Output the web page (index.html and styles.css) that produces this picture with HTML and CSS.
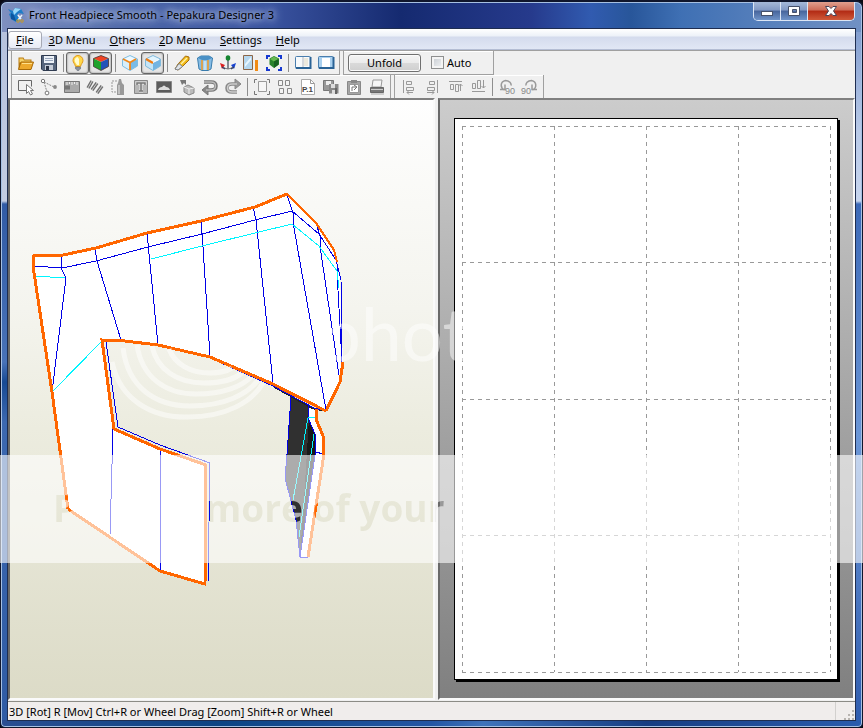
FILE: index.html
```html
<!DOCTYPE html>
<html lang="en">
<head>
    <meta charset="UTF-8">
    <meta name="viewport" content="width=device-width, initial-scale=1.0">
    <title>Front Headpiece Smooth - Pepakura Designer 3</title>
    <link rel="stylesheet" href="styles.css">
</head>
<body>
    <div class="window">
        <header class="titlebar">
            <svg class="app-icon" viewBox="0 0 16 16">
                <path d="M0 2 5 4 7 1 13 2 16 7 11 6 9 8 12 13 8 15 3 12 1 7 3 6z" fill="#1c7cc8"/>
                <path d="M5 4 7 1 13 2 9 5 6 8z" fill="#9ad8f8"/>
                <path d="M3 6 6 8 8 14 3 12z" fill="#0d559f"/>
                <path d="M10 8l3 4M14 8l-4 5" stroke="#e8f2fa" stroke-width="1.5"/>
                <circle cx="10" cy="14" r="1.3" fill="none" stroke="#c59a28"/>
                <circle cx="14" cy="14" r="1.3" fill="none" stroke="#c59a28"/>
            </svg>
            <h1>Front Headpiece Smooth - Pepakura Designer 3</h1>
            <div class="window-buttons">
                <button class="win-btn" aria-label="Minimize">
                    <svg viewBox="0 0 14 14"><rect x="1.5" y="7.5" width="11" height="4" fill="#fff" stroke="#46516b"/></svg>
                </button>
                <button class="win-btn" aria-label="Maximize">
                    <svg viewBox="0 0 14 14"><path d="M1.500 2.500h11v9h-11zM5.500 5.500h4v3h-4z" fill="#fff" fill-rule="evenodd" stroke="#46516b"/></svg>
                </button>
                <button class="win-btn close" aria-label="Close">
                    <svg viewBox="0 0 14 14"><path d="M1.500 2.500H5l2 2 2-2h3.500L9.500 7l3 4.500H9l-2-2-2 2H1.500l3-4.500z" fill="#fff" stroke="#4a4458"/></svg>
                </button>
            </div>
        </header>

        <div class="content">
            <nav class="menubar">
                <button class="active"><u>F</u>ile</button>
                <button><u>3</u>D Menu</button>
                <button><u>O</u>thers</button>
                <button><u>2</u>D Menu</button>
                <button><u>S</u>ettings</button>
                <button><u>H</u>elp</button>
            </nav>

            <div class="toolbar">
                <div class="band">
                    <button class="tool" aria-label="Open">
                        <svg viewBox="0 0 16 16"><path d="M.5 14V2.500h5l1 2h7V14z" fill="#b87b12"/><path d="M1.500 3.500h3.500l1 2h6.500v2h-11z" fill="#f6d268"/><path d="M.5 14.500 3 7h12.500l-2.500 7.500z" fill="#eda92c" stroke="#a86b08"/><path d="M4 8.500h10" stroke="#ffe08a"/></svg>
                    </button>
                    <button class="tool" aria-label="Save">
                        <svg viewBox="0 0 16 16"><path d="M.5.5h15v15H2l-1.500-1.500z" fill="#56657c" stroke="#2f3b50"/><path d="M3 1h10v7H3z" fill="#edf2f8"/><path d="M4 3.500h8M4 5.500h8" stroke="#9aa8bd"/><path d="M4 10h8v5H4z" fill="#c6cdd8"/><path d="M5 11h3v4H5z" fill="#2b3446"/></svg>
                    </button>
                    <i class="sep"></i>
                    <button class="tool pressed" aria-label="Light">
                        <svg viewBox="0 0 16 16"><path d="M8 .5a5 5 0 0 0-5 5c0 2 2 3.500 2.500 6h5c.5-2.500 2.500-4 2.500-6a5 5 0 0 0-5-5z" fill="#ffd84a" stroke="#e0981c"/><path d="M7.500 2a3.500 3.500 0 0 0-2.500 5l2 3h2V4z" fill="#fffbd0"/><path d="M5.500 12h5v2h-1l-.5 1.500H7L6.500 14h-1z" fill="#8c93a0" stroke="#5d6472" stroke-width=".5"/></svg>
                    </button>
                    <button class="tool pressed" aria-label="Texture">
                        <svg viewBox="0 0 16 16"><path d="M8 .5 15.500 3.500 8 7 .5 3.500z" fill="#ef4423"/><path d="M.5 3.500 8 7v8.500l-7.500-4z" fill="#1fa22b"/><path d="M15.500 3.500 8 7v8.500l7.500-4z" fill="#2254b8"/><path d="M8 .5 15.500 3.500v8L8 15.500l-7.500-4v-8z" fill="none" stroke="#473433" stroke-width=".8"/></svg>
                    </button>
                    <i class="sep"></i>
                    <button class="tool" aria-label="Box view">
                        <svg viewBox="0 0 16 16"><path d="M8 .5 15.500 4 8 7.500.5 4z" fill="#edf9ff"/><path d="M.5 4 8 7.500v8L.5 11z" fill="#d8effb"/><path d="M15.500 4 8 7.500v8l7.500-4.500z" fill="#7abbe6"/><path d="M8 .5 15.500 4v7L8 15.500.5 11V4z" fill="none" stroke="#7fbde2"/><path d="M1 4l7 3.500V15M8 7.500 14 4" fill="none" stroke="#f28718" stroke-width="1.800"/></svg>
                    </button>
                    <button class="tool pressed" aria-label="Edge view">
                        <svg viewBox="0 0 16 16"><path d="M8 .5 15.500 4 8 7.500.5 4z" fill="#e3f5fe"/><path d="M.5 4 8 7.500v8L.5 11z" fill="#c5e5f7"/><path d="M15.500 4 8 7.500v8l7.500-4.500z" fill="#72b4e2"/><path d="M8 .5 15.500 4v7L8 15.500.5 11V4z" fill="none" stroke="#7fb9dc"/><path d="M1 4l7 4" stroke="#f07c12" stroke-width="2.200"/><path d="M8 7.500 14 4.500" stroke="#fff"/></svg>
                    </button>
                    <i class="sep"></i>
                    <button class="tool" aria-label="Cut edge">
                        <svg viewBox="0 0 16 16"><path d="M4 9 11.500 1 15 2 15 5 8 12 4 15 1 14z" fill="#f1ba17" stroke="#a56c0c"/><path d="M1 14 5 8.500 8.500 11.500 4 15z" fill="#dfe3e8" stroke="#7e8792"/><path d="M7 9 13 3" stroke="#fff2a6" stroke-width="1.500"/></svg>
                    </button>
                    <button class="tool" aria-label="Cylinder">
                        <svg viewBox="0 0 16 16"><path d="M.5 3 4 1h8l3.500 2L14 14l-3 1.500H5L2 14z" fill="#85bce5" stroke="#397cad"/><path d="M1 3l4 2h6l4-2-3-2H4z" fill="#4a91c6"/><path d="M5 5v10M11 5v10" stroke="#f39b25" stroke-width="1.500"/><path d="M8 6v9" stroke="#c2e0f5" stroke-width="3"/></svg>
                    </button>
                    <button class="tool" aria-label="Axes">
                        <svg viewBox="0 0 16 16"><path d="M8 4v10" stroke="#4b5260" stroke-width="1.300"/><ellipse cx="8" cy="3" rx="2.300" ry="2.800" fill="#168530"/><path d="M2 11q3 3 6 3t6-3" fill="none" stroke="#777" stroke-width="1"/><path d="M0 8l5 2-3 4z" fill="#dc2020"/><path d="M16 8l-5 2 3 4z" fill="#1742cf"/><path d="M2 12l3 2M14 12l-3 2" stroke="#343f64" stroke-width="1.500"/></svg>
                    </button>
                    <button class="tool" aria-label="Mirror">
                        <svg viewBox="0 0 16 16"><path d="M.5.5h9v14h-9z" fill="#b5d7ef" stroke="#8b6648"/><path d="M2 9 8 2v3L2 12z" fill="#e9f6fd"/><path d="M12 5h3v11h-3z" fill="#f18c17"/></svg>
                    </button>
                    <button class="tool" aria-label="Fit model">
                        <svg viewBox="0 0 16 16"><path d="M1 4V1h3M12 1h3v3M1 12v3h3M12 15h3v-3" fill="none" stroke="#1639d0" stroke-width="2"/><path d="M8 1 13 3.500v6L8 13 3.500 9.500v-6z" fill="#29822c"/><path d="M8 1.500 12.500 4 8 6.500 4 4z" fill="#67b851"/><path d="M8 6.500V13l4.500-3.500V4z" fill="#176021"/></svg>
                    </button>
                    <i class="sep"></i>
                    <button class="tool" aria-label="Split windows">
                        <svg viewBox="0 0 16 16"><rect x=".5" y="1.500" width="15" height="12" rx="1" fill="#f7fafc" stroke="#4a7eae"/><path d="M1 13h14.500V2" fill="none" stroke="#2a6396" stroke-width="2"/><path d="M8 2v10" stroke="#b2b6bd"/><path d="M9 3h4v8H9z" fill="#ece9dd"/></svg>
                    </button>
                    <button class="tool" aria-label="Single window">
                        <svg viewBox="0 0 16 16"><rect x=".5" y="1.500" width="15" height="12" rx="1" fill="#a9d0ef" stroke="#4a7eae"/><path d="M1 13h14.500V2" fill="none" stroke="#2a6396" stroke-width="2"/><path d="M4 3h8v9H4z" fill="#fff"/></svg>
                    </button>
                </div>
                <div class="band unfold-band">
                    <button class="unfold">Unfold</button>
                    <input type="checkbox" id="auto">
                    <label for="auto">Auto</label>
                </div>
            </div>

            <div class="toolbar second">
                <div class="band gray">
                    <button class="tool" aria-label="Select">
                        <svg viewBox="0 0 16 16"><path d="M8 11.500H.5v-10h13v6" fill="none" stroke="#666"/><path d="M8.500 5.500v9l2-2 2 3.500 2-1-2-3.500h3z" fill="#fff" stroke="#777"/></svg>
                    </button>
                    <button class="tool" aria-label="Join">
                        <svg viewBox="0 0 16 16"><path d="M3 3 13 8M3 3l3 10" stroke="#888" stroke-dasharray="2 1"/><circle cx="2" cy="2" r="1.700" fill="#fff" stroke="#777"/><circle cx="14" cy="8" r="1.900" fill="#888"/><circle cx="6" cy="14" r="1.900" fill="#fff" stroke="#777"/></svg>
                    </button>
                    <button class="tool" aria-label="Measure">
                        <svg viewBox="0 0 16 16"><path d="M.5 2.500h15v11H.5z" fill="#aaa" stroke="#777"/><path d="M3 3v3M5.500 3v2M8 3v3M10.500 3v2M13 3v3" stroke="#eee"/><path d="M1 6.500h5v4H1z" fill="#777"/></svg>
                    </button>
                    <button class="tool" aria-label="Flaps">
                        <svg viewBox="0 0 16 16"><path d="M1 9 5 2M5 11l5-7M10 14l5-7" stroke="#707070" stroke-width="3.500"/><path d="M1 9 5 2M5 11l5-7M10 14l5-7" stroke="#ccc" stroke-width="1"/></svg>
                    </button>
                    <button class="tool" aria-label="Glue">
                        <svg viewBox="0 0 16 16"><path d="M7 2H2v11h5" fill="none" stroke="#999" stroke-dasharray="2 1"/><path d="M7 6l1-2 1-4h2l1 4 2 2v10H7z" fill="#999"/><path d="M9 6v9" stroke="#e7e7e7"/></svg>
                    </button>
                    <button class="tool" aria-label="Text">
                        <svg viewBox="0 0 16 16"><path d="M1.500 1.500h13v13h-13z" fill="#b7b7b7" stroke="#888"/><path d="M4 6V4h8v2M8 4v8M6 12h4" fill="none" stroke="#e6e6e6" stroke-width="3"/><path d="M4 6V4h8v2M8 4v8M6 12h4" fill="none" stroke="#777" stroke-width="1.500"/></svg>
                    </button>
                    <button class="tool" aria-label="Image">
                        <svg viewBox="0 0 16 16"><path d="M.5 2.500h15v11H.5z" fill="#5c5c5c" stroke="#888"/><path d="M2 11q1-3 4-3 2-3 4 0 3 0 4 3z" fill="#ddd"/></svg>
                    </button>
                    <button class="tool" aria-label="Rotate object">
                        <svg viewBox="0 0 16 16"><path d="M9 6 15 9v5l-5 2-5-3V8z" fill="#bbb" stroke="#888"/><path d="M10 10v5M5 8l5 2 5-1" fill="none" stroke="#eee"/><path d="M1 1h6v5L5 4 3 6z" fill="#777"/></svg>
                    </button>
                    <button class="tool" aria-label="Undo">
                        <svg viewBox="0 0 16 16"><path d="M2 3h7q5 0 5 4t-5 4H5" fill="none" stroke="#777" stroke-width="3.500"/><path d="M0 11l6-5v10z" fill="#888" stroke="#777"/><path d="M2 3h7q4.500 0 4.500 4t-4.500 4H4" fill="none" stroke="#bbb" stroke-width="1.500"/></svg>
                    </button>
                    <button class="tool" aria-label="Redo">
                        <svg viewBox="0 0 16 16"><path d="M12 13H7q-5 0-5-4t5-4h4" fill="none" stroke="#888" stroke-width="3.500"/><path d="M16 5l-6-5v10z" fill="#999" stroke="#888"/><path d="M12 13H7q-4.500 0-4.500-4T7 5h5" fill="none" stroke="#ccc" stroke-width="1.500"/></svg>
                    </button>
                    <i class="sep"></i>
                    <button class="tool" aria-label="Fit pattern">
                        <svg viewBox="0 0 16 16"><path d="M.5 4V.5H3M13 .5h2.500V4M.5 12v3.500H3M13 15.500h2.500V12" fill="none" stroke="#777"/><path d="M4.500 2.500h8v10h-8z" fill="#f6f6f6" stroke="#999"/></svg>
                    </button>
                    <button class="tool" aria-label="Arrange">
                        <svg viewBox="0 0 16 16"><path d="M1.500 1.500h4v5h-4zM8.500 1.500h4v5h-4zM2.500 9.500h4v5h-4zM10.500 9.500h4v5h-4z" fill="#f4f4f4" stroke="#888"/></svg>
                    </button>
                    <button class="tool" aria-label="Page number">
                        <svg viewBox="0 0 16 16"><path d="M1.500.5h9l4 4v11h-13z" fill="#fff" stroke="#aaa"/><path d="M10.500.5v4h4" fill="none" stroke="#999"/><text x="2" y="13" class="icon-text">P.1</text></svg>
                    </button>
                    <button class="tool" aria-label="Export">
                        <svg viewBox="0 0 16 16"><path d="M.5 1.500h10v10H.5z" fill="#999" stroke="#777"/><path d="M3 2h5v4H3z" fill="#eee"/><path d="M6 5h9.500v9.500H6z" fill="#888"/><path d="M8 5h4v4H8zM9 11h3v4H9z" fill="#ddd"/><path d="M13 9v6" stroke="#666" stroke-width="2"/></svg>
                    </button>
                    <button class="tool" aria-label="Copy">
                        <svg viewBox="0 0 16 16"><path d="M1.500 2.500h13v13h-13z" fill="#a6a6a6" stroke="#888"/><path d="M3.500 5.500h9v8h-9z" fill="#fff" stroke="#999"/><path d="M5 1h6v3H5z" fill="#888"/><path d="M6 12V8h4M8 6l3 2-3 3" fill="none" stroke="#777"/></svg>
                    </button>
                    <button class="tool" aria-label="Print">
                        <svg viewBox="0 0 16 16"><path d="M4 1h9l-1 7H3z" fill="#f5f5f5" stroke="#999"/><path d="M1.500 8.500h13v5h-13z" fill="#777" stroke="#666"/><path d="M2 10.500h12" stroke="#ccc"/><path d="M2 15h13" stroke="#aaa"/></svg>
                    </button>
                </div>
                <div class="band gray align-band">
                    <button class="tool" aria-label="Align left">
                        <svg viewBox="0 0 16 16"><path d="M2.500 1v13M5.500 2.500h5v3h-5zM5.500 8.500h7v3h-7zM12 13.500H6l2-2M6 13.500l2 2" fill="none" stroke="#999"/></svg>
                    </button>
                    <button class="tool" aria-label="Align right">
                        <svg viewBox="0 0 16 16"><path d="M13.500 1v13M5.500 2.500h5v3h-5zM3.500 8.500h7v3h-7zM3 13.500h7l-2-2M10 13.500l-2 2" fill="none" stroke="#999"/></svg>
                    </button>
                    <button class="tool" aria-label="Align top">
                        <svg viewBox="0 0 16 16"><path d="M2 2.500h13M3.500 5.500h3v5h-3zM8.500 5.500h3v7h-3zM13.500 12V5l-2 2M13.500 5l2 2" fill="none" stroke="#999"/></svg>
                    </button>
                    <button class="tool" aria-label="Align bottom">
                        <svg viewBox="0 0 16 16"><path d="M2 12.500h13" stroke="#999" stroke-width="1"/><path d="M2.500 4.500h3v5h-3zM7.500 1.500h3v8h-3zM13.500 1v8l-2-2M13.500 9l2-2" fill="none" stroke="#999"/></svg>
                    </button>
                    <i class="sep"></i>
                    <button class="tool" aria-label="Rotate left 90">
                        <svg viewBox="0 0 16 16"><path d="M5.500 11C1 9 1 2.500 6.500 1.500c4 0 6 3 5.500 5M1 10.500h5v-5" fill="none" stroke="#999" stroke-width="1.500"/><text x="6" y="15" class="icon-num">90</text></svg>
                    </button>
                    <button class="tool" aria-label="Rotate right 90">
                        <svg viewBox="0 0 16 16"><path d="M10.500 11C15 9 15 2.500 9.500 1.500c-4 0-6 3-5.500 5M15 10.500h-5v-5" fill="none" stroke="#999" stroke-width="1.500"/><text x="-1" y="15" class="icon-num">90</text></svg>
                    </button>
                </div>
            </div>

            <main class="workspace">
                <section class="view-3d">
                    <svg viewBox="10 100 423 598" preserveAspectRatio="xMinYMin meet" class="model">
                        <!-- shell -->
                        <path class="paper" d="M34 255H63L96 248 147 233 201 221 255 207 287 194 316 223 334 250 340 276 343 362 340 382 326 411 273 384 210 357 158 345 102 340 114 429 160 449 206 465 205 584 160 571 68 509 52 392 33 266z"/>
                        <!-- inner tail -->
                        <path fill="#303030" d="M291 397 309 406 308 418 315 434V455L300 557 296 520 285 478 287 454z"/>
                        <path fill="#181818" d="M309 418 315 434V455L300 557 304 500z"/>
                        <path class="paper" d="M309 406 316 409V419L323 436 324 454 308 557H300L315 455V434L308 418z"/>
                        <path class="black" d="M273 386 312 408 326 411"/>
                        <g class="fold">
                            <path d="M33 266 62 268 96 261 148 247 202 234 255 220 292 211 319 234 336 260"/>
                            <path d="M61 256V268L66 278 52 392M95 248 97 261 121 340M147 233 158 345M201 221 203 247 210 356M253 207 256 220 273 383M287 195 293 213 294 228 326 410M316 223 320 236V246L340 382M334 250 337 264 341 280 342 362M337 264V272L342 362"/>
                            <path d="M106 342 118 427 160 445 210 463 208 582M113 429 110 535M160 449V571"/>
                            <path d="M210 358 273 386 314 408 326 411M291 397 287 454 285 478 296 520 300 557H308M309 406 308 418 315 434V455L300 557M315 452 324 454"/>
                        </g>
                        <g class="mark">
                            <path d="M35 276 65 278M151 259 202 246 255 233 292 224 319 246 337 271 339 288M52 392 102 341"/>
                            <path d="M308 417H316M308 418 293 500M314 434 299 537"/>
                        </g>
                        <g class="cut">
                            <path d="M33 266 34 255H63L96 248 147 233 201 221 255 207 287 194"/>
                            <path class="thin" d="M287 194 316 223 334 250 337 262"/>
                            <path d="M343 362 340 382 326 411M33 266 52 392 68 509"/>
                            <path d="M326 411 273 384 210 357 158 345 125 341 102 340 114 429 160 449 206 465 205 584 160 571 68 509"/>
                            <path d="M316 409V419L323 436 324 454 308 557"/>
                        </g>
                    </svg>
                </section>
                <section class="view-2d">
                    <div class="sheet">
                        <svg class="grid-lines">
                            <line x1="0" y1="0" x2="100%" y2="0"/>
                            <line x1="0" y1="25%" x2="100%" y2="25%"/>
                            <line x1="0" y1="50%" x2="100%" y2="50%"/>
                            <line x1="0" y1="75%" x2="100%" y2="75%"/>
                            <line x1="0" y1="100%" x2="100%" y2="100%"/>
                            <line x1="0" y1="0" x2="0" y2="100%"/>
                            <line x1="25%" y1="0" x2="25%" y2="100%"/>
                            <line x1="50%" y1="0" x2="50%" y2="100%"/>
                            <line x1="75%" y1="0" x2="75%" y2="100%"/>
                            <line x1="100%" y1="0" x2="100%" y2="100%"/>
                        </svg>
                    </div>
                </section>
            </main>

            <footer class="statusbar">
                <p>3D [Rot] R [Mov] Ctrl+R or Wheel Drag [Zoom] Shift+R or Wheel</p>
                <svg class="resize-grip" viewBox="0 0 10 10"><path d="M8 0h2v2H8zM8 4h2v2H8zM4 4h2v2H4zM8 8h2v2H8zM4 8h2v2H4zM0 8h2v2H0z" fill="#b8b4b0"/></svg>
            </footer>
        </div>

        <svg class="watermark" viewBox="0 0 863 728" preserveAspectRatio="xMinYMin slice">
            <defs>
                <mask id="letters">
                    <rect width="863" height="728" fill="#fff"/>
                    <text x="53" y="522" class="slogan">P</text>
                    <text x="205" y="522" class="slogan">more of your</text>
                </mask>
            </defs>
            <rect x="0" y="455" width="863" height="108" class="strip" mask="url(#letters)"/>
            <g class="swirl">
                <path d="M112 362C120 400 152 418 188 417 226 417 252 402 263 383"/>
                <path d="M123 348C128 388 156 406 190 406 225 406 248 394 258 380"/>
                <path d="M137 345C142 378 166 394 196 394 224 394 242 386 251 377"/>
                <path d="M152 346C157 370 178 383 204 383 223 383 236 378 242 373"/>
                <path d="M169 349C175 364 190 373 210 373 220 373 227 371 232 368"/>
            </g>
            <text x="320" y="361" class="brand">phot</text>
        </svg>
    </div>
</body>
</html>
```
FILE: styles.css
```css
*{
    padding: 0;
    margin: 0;
    box-sizing: border-box;
}
body{
    height: 100vh;
    overflow: hidden;
    background: #0a0a14;
    font-family: "Noto Sans", "Open Sans", sans-serif;
    font-size: 11px;
    color: #000;
}
button{
    border: none;
    background: none;
    font: inherit;
    color: inherit;
}
.window{
    position: relative;
    height: 100vh;
    display: flex;
    flex-direction: column;
    padding: 0 7px 7px;
    border: 1px solid #10162c;
    border-top-width: 2px;
    border-radius: 7px 7px 5px 5px;
    background:
        linear-gradient(90deg, #7f90c0 0, #4c66a8 130px, #3a539f 270px, #152a70 400px, #263a8c 530px, #315bb0 590px, #28569a 630px, #3f70b4 680px, #7191c4 100%) top / 100% 30px no-repeat,
        linear-gradient(90deg, #2b4e92, #0c4484 25%, #2456a4 50%, #3f73bb 56%, #173d82 75%, #2a5cae) bottom / 100% 7px no-repeat,
        linear-gradient(180deg, #b4c0dc 0, #c3cde2 199px, #315ba5 202px, #4872b8 360px, #174a94 380px, #3c68b0 420px, #2f5ba4 100%) left / 50% 100% no-repeat,
        linear-gradient(180deg, #7391c8 0, #b9cae8 130px, #c7d5ee 199px, #3d6ab8 202px, #6b96d6 60%, #2f5cae 100%);
    box-shadow: inset 0 0 0 1px #a6c0e2;
}
.titlebar{
    display: flex;
    height: 27px;
    flex: none;
}
.app-icon{
    width: 16px;
    height: 16px;
    margin: 5px 5px 0 0;
}
.titlebar h1{
    font-size: 11px;
    font-weight: normal;
    line-height: 26px;
    white-space: nowrap;
    text-shadow: 0 0 6px #b7c6e6, 0 0 8px #b7c6e6, 0 0 12px #b7c6e6;
}
.window-buttons{
    display: flex;
    height: 19px;
    margin-left: auto;
    border: 1px solid #dbe5f5;
    border-top: none;
    border-radius: 0 0 5px 5px;
    overflow: hidden;
}
.win-btn{
    width: 27px;
    border-right: 1px solid #dbe5f5;
    background: linear-gradient(#a5b9d9 0, #8299c4 45%, #47659c 50%, #6f93c8 100%);
}
.win-btn svg{
    width: 14px;
    height: 14px;
    display: block;
    margin: auto;
}
.win-btn.close{
    width: 46px;
    border-right: none;
    background: linear-gradient(#dfa08f 0, #cc6b57 45%, #b22a14 50%, #cf5a3a 100%);
}
.content{
    flex: 1;
    min-height: 0;
    display: flex;
    flex-direction: column;
    background: #f0f0f0;
    outline: 1px solid #1e2d50;
}
.menubar{
    display: flex;
    height: 21px;
    flex: none;
    padding-top: 2px;
    background: linear-gradient(#fff 0, #edf1f8 7px, #d4dbed 8px, #e1e7f5 100%);
    border-bottom: 1px solid #b4bdd4;
}
.menubar button{
    padding: 0 7px;
    height: 18px;
    line-height: 18px;
    white-space: nowrap;
}
.menubar .active{
    border: 1px solid #a6a9b4;
    border-radius: 3px;
    line-height: 16px;
    background: linear-gradient(#fff, #e6eaf5);
}
.toolbar{
    display: flex;
    height: 25px;
    flex: none;
    border-top: 1px solid #a0a0a0;
}
.second{
    height: 23px;
    border-top: none;
}
.band{
    display: flex;
    align-items: center;
    padding: 0 2px;
    margin-left: 3px;
    border-left: 1px solid #a0a0a0;
    border-right: 1px solid #a0a0a0;
    border-bottom: 1px solid #a0a0a0;
    box-shadow: inset 0 1px #fff;
}
.second .band{
    border-bottom: none;
}
.tool{
    width: 23px;
    height: 22px;
    display: flex;
    align-items: center;
    justify-content: center;
}
.tool svg{
    width: 16px;
    height: 16px;
    overflow: visible;
}
.pressed{
    border: 1px solid #666;
    border-radius: 3px;
    background: #e6e6e6;
    box-shadow: inset 0 0 2px #777;
}
.sep{
    width: 1px;
    height: 18px;
    margin: 0 2px 0 3px;
    background: #8e8e8e;
}
.icon-text{
    font: bold 8px "Liberation Sans", sans-serif;
    fill: #444;
}
.icon-num{
    font: 9px "Liberation Sans", sans-serif;
    fill: #888;
}
.unfold-band{
    padding: 0 22px 0 4px;
}
.unfold{
    width: 73px;
    height: 18px;
    line-height: 16px;
    border: 1px solid #707070;
    border-radius: 3px;
    background: linear-gradient(#f4f4f4 0, #ebebeb 50%, #dadada 50%, #cfcfcf 100%);
    box-shadow: inset 0 0 0 1px #fbfbfb;
}
#auto{
    appearance: none;
    width: 13px;
    height: 13px;
    margin: 0 3px 0 10px;
    border: 1px solid #8e8f8f;
    background: linear-gradient(135deg, #c5cad0, #f4f5f6);
    box-shadow: inset 0 0 0 2px #f4f4f4;
}
.workspace{
    flex: 1;
    min-height: 0;
    display: grid;
    grid-template-columns: 427fr 417fr;
    gap: 3px;
}
.view-3d, .view-2d{
    border: 2px solid #696969;
    border-top-color: #808080;
    border-right-color: #fafafa;
    border-bottom-color: #fafafa;
    min-width: 0;
    min-height: 0;
}
.view-3d{
    background: linear-gradient(#fefefe, #f4f4ee 35%, #ececdf 55%, #dcdbc7);
}
.view-2d{
    display: flex;
    padding: 18px 15px 18px 14px;
    background: linear-gradient(#cccccc, #808080);
}
.model{
    display: block;
    width: 100%;
    height: 100%;
    fill: none;
    shape-rendering: crispEdges;
}
.model .paper{
    fill: #fff;
}
.fold{
    stroke: #0000e6;
}
.mark{
    stroke: #00f5ff;
}
.cut{
    stroke: #ff6600;
    stroke-width: 3;
}
.cut .thin{
    stroke-width: 2;
}
.black{
    stroke: #222;
    stroke-width: 2;
}
.sheet{
    flex: 1;
    padding: 7px;
    border: 1px solid #000;
    background: #fff;
    box-shadow: 2px 2px #000;
}
.grid-lines{
    display: block;
    width: 100%;
    height: 100%;
    overflow: visible;
    stroke: #999;
    stroke-dasharray: 4 4;
    shape-rendering: crispEdges;
}
.statusbar{
    display: flex;
    flex: none;
    height: 19px;
    margin-top: 1px;
    padding: 0 1px;
    border-top: 1px solid #8c8c86;
    background: #f0edec;
}
.statusbar p{
    flex: 1;
    line-height: 20px;
    border-right: 1px solid #d2d0ce;
}
.resize-grip{
    width: 10px;
    height: 10px;
    margin: 8px 0 0 8px;
}
.watermark{
    position: absolute;
    inset: -2px -1px -1px;
    width: 100vw;
    height: 100vh;
    pointer-events: none;
}
.strip{
    fill: #fff;
    opacity: .6;
}
.slogan{
    font: bold 37px "Open Sans", sans-serif;
    fill: #000;
}
.swirl{
    fill: none;
    stroke: #fff;
    stroke-width: 5;
    opacity: .5;
}
.brand{
    font: 73px Lato, sans-serif;
    fill: #fff;
    opacity: .5;
}
```
